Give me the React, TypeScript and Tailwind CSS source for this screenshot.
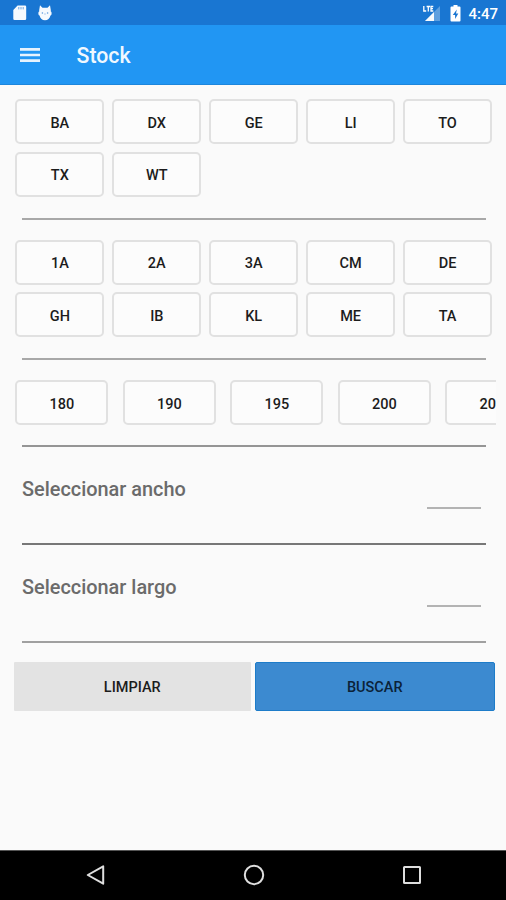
import { clsx } from 'clsx'

const families = ['BA', 'DX', 'GE', 'LI', 'TO', 'TX', 'WT']
const qualities = ['1A', '2A', '3A', 'CM', 'DE', 'GH', 'IB', 'KL', 'ME', 'TA']
const thicknesses = ['180', '190', '195', '200', '205']

function StatusBar() {
  return (
    <div className="flex h-[25px] shrink-0 items-center bg-[#1976d2] pl-[13px] pr-2 text-white">
      <svg width="14" height="16" viewBox="0 0 14 16" className="mt-px">
        <path d="M4.6.5h7.4a1.2 1.2 0 0 1 1.2 1.2v12.1a1.2 1.2 0 0 1-1.2 1.2H1.500a1.2 1.2 0 0 1-1.2-1.2V5z" fill="#fff" fillOpacity=".96" />
        <path d="M5.800 2v2.400M8 2v2.400M10.200 2v2.400" stroke="#6ea6e0" strokeWidth="1" />
      </svg>
      <svg width="14" height="16" viewBox="0 0 14 16" className="ml-[11px]">
        <path
          d="M2 .3 4.500 2.700h5L12 .3l.8 4.700v1.500c.7.300.900 1 .8 2.200-.1 1-.5 1.500-1.100 1.700-.8 3-2.600 4.800-5.500 4.800s-4.700-1.800-5.500-4.800C.900 10.200.5 9.700.4 8.700.3 7.500.5 6.800 1.200 6.500V5z"
          fill="#fff"
          fillOpacity=".96"
        />
        <circle cx="4.400" cy="8" r=".8" fill="#5c9bdd" />
        <circle cx="9.600" cy="8" r=".8" fill="#5c9bdd" />
        <path d="M6.200 9h1.600" stroke="#8bb8e6" strokeWidth=".8" />
      </svg>

      <div className="ml-auto flex items-center">
        <svg width="20" height="16" viewBox="0 0 20 16">
          <path d="M4 16 19 1v15z" fill="#fff" fillOpacity=".3" />
          <path d="M4 16 13 7v9z" fill="#fff" fillOpacity=".95" />
          <path d="M2.800 1v5h2.400M5.600 1.500h3.400M7.300 1.500v5M12.300 1.500H10V6h2.300M10 3.700h2" fill="none" stroke="#fff" strokeWidth="1.300" />
        </svg>
        <svg width="11" height="17" viewBox="0 0 11 17" className="mt-px ml-[9px]">
          <path d="M3.500 0h4v1.600H9.500A1 1 0 0 1 10.500 2.600V15.500a1 1 0 0 1-1 1H1.500a1 1 0 0 1-1-1V2.600a1 1 0 0 1 1-1h2z" fill="#fff" />
          <path d="M6.800 4.500 2.800 9.900h2.300v4L8.300 8.500H6z" fill="#1976d2" />
        </svg>
        <span className="mt-[3px] ml-[7px] text-[15px] leading-none font-medium">4:47</span>
      </div>
    </div>
  )
}

function Toolbar() {
  return (
    <header className="flex h-[60px] shrink-0 items-center border-b border-[#1d86dc] bg-[#2196f3] pl-5">
      <svg width="20" height="14" viewBox="0 0 20 14" className="mt-px">
        <path d="M0 1.400h20M0 7h20M0 12.600h20" stroke="#e6f3fe" strokeWidth="2.600" />
      </svg>
      <h1 className="mt-[3px] ml-[36.500px] text-[21.300px] leading-none font-medium text-[#f0f8ff]">Stock</h1>
    </header>
  )
}

function Chip({ label, className }: { label: string; className?: string }) {
  return (
    <button
      className={clsx(
        'h-[45px] shrink-0 rounded-[5px] border-2 border-[#e1e1e1] bg-[#fcfcfc] pt-1 text-[14.500px] font-medium text-[#1c1c1c]',
        className
      )}
    >
      {label}
    </button>
  )
}

function ChipGrid({ items }: { items: string[] }) {
  return (
    <div className="grid grid-cols-5 gap-x-2 gap-y-[7.500px] pl-[15.400px] pr-[14px]">
      {items.map((item) => (
        <Chip key={item} label={item} />
      ))}
    </div>
  )
}

function Divider({ className }: { className?: string }) {
  return <div className={clsx('mr-5 ml-[22px] h-0.5 shrink-0', className)} />
}

function SelectRow({ label }: { label: string }) {
  return (
    <div className="flex h-[96px] shrink-0 justify-between pr-[25px] pl-[22px]">
      <span className="pt-[31px] text-[19.900px] leading-6 font-medium text-[#6b6b6b]">{label}</span>
      <div className="mt-[60px] h-0.5 w-[54px] bg-[#b3b3b3]" />
    </div>
  )
}

function NavBar() {
  return (
    <nav className="flex h-[50px] shrink-0 items-center justify-between border-t border-[#555] bg-black pr-[84px] pl-[86px]">
      <svg width="20" height="20" viewBox="0 0 20 20" fill="none" stroke="#dedede" strokeWidth="2" className="-mt-px">
        <path d="M17.200 1.300v17.400L1.800 10z" strokeLinejoin="round" />
      </svg>
      <svg width="22" height="22" viewBox="0 0 22 22" fill="none" stroke="#dedede" strokeWidth="2" className="-mt-px">
        <circle cx="11" cy="11" r="9.200" />
      </svg>
      <svg width="20" height="20" viewBox="0 0 20 20" fill="none" stroke="#dedede" strokeWidth="2" className="-mt-px">
        <rect x="2" y="2" width="16" height="16" rx=".5" />
      </svg>
    </nav>
  )
}

export default function App() {
  return (
    <div className="flex h-[900px] w-[506px] flex-col overflow-hidden bg-[#fafafa] font-[Roboto,sans-serif]">
      <StatusBar />
      <Toolbar />

      <main className="flex min-h-0 flex-1 flex-col pt-[14px]">
        <ChipGrid items={families} />
        <Divider className="mt-[21px] mb-5 bg-[#a8a8a8]" />
        <ChipGrid items={qualities} />
        <Divider className="mt-[20.500px] mb-[20.500px] bg-[#a8a8a8]" />

        {/* Horizontal scroller */}
        <div className="mr-[10px] flex shrink-0 gap-[14.500px] overflow-hidden pl-[15.400px]">
          {thicknesses.map((item) => (
            <Chip key={item} label={item} className="w-[93px]" />
          ))}
        </div>
        <Divider className="mt-5 bg-[#959595]" />

        <SelectRow label="Seleccionar ancho" />
        <Divider className="bg-[#777]" />
        <SelectRow label="Seleccionar largo" />
        <Divider className="bg-[#a0a0a0]" />

        <div className="mt-[19px] mr-[11.500px] ml-[13.500px] flex h-[49px] shrink-0 gap-1 text-[14.500px] font-medium">
          <button className="flex-1 rounded-[1px] bg-[#e3e3e3] pt-[3px] text-[#1c1c1c]">LIMPIAR</button>
          <button className="flex-1 rounded-[2px] border border-[#1d7cc9] bg-[#3c8ad0] pt-[3px] text-[#0b2238]">BUSCAR</button>
        </div>
      </main>

      <NavBar />
    </div>
  )
}
